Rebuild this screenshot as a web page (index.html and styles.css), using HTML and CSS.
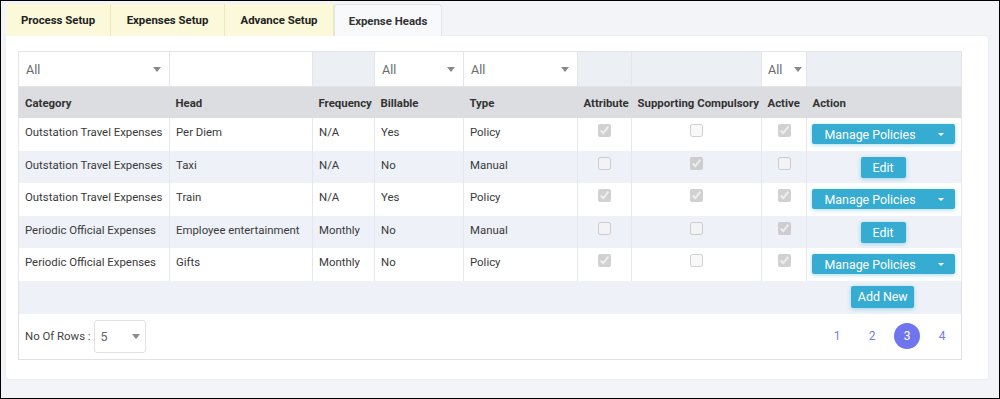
FILE: index.html
```html
<!DOCTYPE html>
<html>
<head>
<meta charset="utf-8">
<link rel="stylesheet" href="styles.css">
</head>
<body>
<div class="frame">
  <div class="tabs">
    <div class="tab">Process Setup</div>
    <div class="tab">Expenses Setup</div>
    <div class="tab">Advance Setup</div>
    <div class="tab active">Expense Heads</div>
  </div>
  <div class="panel">
    <table class="grid">
      <colgroup>
        <col class="c-cat"><col class="c-head"><col class="c-freq"><col class="c-bill"><col class="c-type"><col class="c-attr"><col class="c-sup"><col class="c-act"><col class="c-action">
      </colgroup>
      <thead>
        <tr class="filters">
          <td class="sel"><div class="dd"><span>All</span><i class="caret"></i></div></td>
          <td class="inp"></td>
          <td class="blank"></td>
          <td class="sel"><div class="dd"><span>All</span><i class="caret"></i></div></td>
          <td class="sel"><div class="dd"><span>All</span><i class="caret"></i></div></td>
          <td class="blank"></td>
          <td class="blank"></td>
          <td class="sel"><div class="dd narrow"><span>All</span><i class="caret"></i></div></td>
          <td class="blank"></td>
        </tr>
        <tr class="heads">
          <th>Category</th><th>Head</th><th>Frequency</th><th>Billable</th><th>Type</th><th>Attribute</th><th>Supporting Compulsory</th><th>Active</th><th>Action</th>
        </tr>
      </thead>
      <tbody>
        <tr>
          <td>Outstation Travel Expenses</td><td>Per Diem</td><td>N/A</td><td>Yes</td><td>Policy</td>
          <td class="chk"><input type="checkbox" disabled checked></td>
          <td class="chk"><input type="checkbox" disabled></td>
          <td class="chk"><input type="checkbox" disabled checked></td>
          <td class="act"><button class="btn split"><span>Manage Policies</span><i class="bcaret"></i></button></td>
        </tr>
        <tr class="alt">
          <td>Outstation Travel Expenses</td><td>Taxi</td><td>N/A</td><td>No</td><td>Manual</td>
          <td class="chk"><input type="checkbox" disabled></td>
          <td class="chk"><input type="checkbox" disabled checked></td>
          <td class="chk"><input type="checkbox" disabled></td>
          <td class="act"><button class="btn edit">Edit</button></td>
        </tr>
        <tr>
          <td>Outstation Travel Expenses</td><td>Train</td><td>N/A</td><td>Yes</td><td>Policy</td>
          <td class="chk"><input type="checkbox" disabled checked></td>
          <td class="chk"><input type="checkbox" disabled checked></td>
          <td class="chk"><input type="checkbox" disabled checked></td>
          <td class="act"><button class="btn split"><span>Manage Policies</span><i class="bcaret"></i></button></td>
        </tr>
        <tr class="alt">
          <td>Periodic Official Expenses</td><td>Employee entertainment</td><td>Monthly</td><td>No</td><td>Manual</td>
          <td class="chk"><input type="checkbox" disabled></td>
          <td class="chk"><input type="checkbox" disabled></td>
          <td class="chk"><input type="checkbox" disabled checked></td>
          <td class="act"><button class="btn edit">Edit</button></td>
        </tr>
        <tr>
          <td>Periodic Official Expenses</td><td>Gifts</td><td>Monthly</td><td>No</td><td>Policy</td>
          <td class="chk"><input type="checkbox" disabled checked></td>
          <td class="chk"><input type="checkbox" disabled></td>
          <td class="chk"><input type="checkbox" disabled checked></td>
          <td class="act"><button class="btn split"><span>Manage Policies</span><i class="bcaret"></i></button></td>
        </tr>
      </tbody>
      <tfoot>
        <tr class="addrow">
          <td colspan="8"></td>
          <td class="act"><button class="btn add">Add New</button></td>
        </tr>
        <tr class="pager-row">
          <td colspan="9">
            <div class="pager-bar">
              <div class="rows">
                <span class="rows-label">No Of Rows :</span>
                <div class="rows-sel"><span>5</span><i class="caret"></i></div>
              </div>
              <div class="pages">
                <span class="pg">1</span>
                <span class="pg">2</span>
                <span class="pg current">3</span>
                <span class="pg">4</span>
              </div>
            </div>
          </td>
        </tr>
      </tfoot>
    </table>
  </div>
</div>
</body>
</html>
```

FILE: styles.css
```css
html, body {
  margin: 0;
  padding: 0;
}
body {
  background: #f3f4f8;
  font-family: Roboto, "Liberation Sans", Arial, sans-serif;
  color: #333;
}
.frame {
  width: 1000px;
  height: 399px;
  box-sizing: border-box;
  border: 1px solid #000;
  padding: 3px 0 0 5px;
  background: #f3f4f8;
}
.tabs {
  display: flex;
  height: 32px;
}
.tab {
  display: flex;
  align-items: center;
  justify-content: center;
  box-sizing: border-box;
  height: 32px;
  font-size: 11.4px;
  font-weight: 700;
  color: #222;
  background: #fbf9da;
  border-right: 1px solid #ece9bd;
}
.tab:nth-child(1) { width: 105px; }
.tab:nth-child(2) { width: 114px; }
.tab:nth-child(3) { width: 109px; }
.tab.active {
  width: 108px;
  background: #f8f9fb;
  border: 1px solid #e1e3e8;
  border-bottom: none;
  border-radius: 4px 4px 0 0;
  color: #333;
}
.panel {
  width: 982px;
  height: 343px;
  box-sizing: border-box;
  background: #fff;
  padding: 15px 0 0 12px;
  border-radius: 0 3px 3px 3px;
  box-shadow: 0 0 3px rgba(0, 0, 0, 0.07);
}
.grid {
  width: 943px;
  table-layout: fixed;
  border-collapse: collapse;
  border: 1px solid #dfe1e6;
  font-size: 11.4px;
}
.c-cat { width: 151px; }
.c-head { width: 143px; }
.c-freq { width: 62px; }
.c-bill { width: 89px; }
.c-type { width: 114px; }
.c-attr { width: 54px; }
.c-sup { width: 130px; }
.c-act { width: 45px; }
.c-action { width: 155px; }

.filters td {
  height: 34px;
  padding: 0;
  border: 1px solid #e3e5ea;
  background: #eceff3;
}
.filters td.sel, .filters td.inp {
  background: #fff;
}
.dd {
  display: flex;
  align-items: center;
  justify-content: space-between;
  height: 34px;
  padding: 0 8px 0 7px;
  font-size: 12.5px;
  color: #6a6a6a;
}
.dd.narrow {
  padding: 0 4px 0 6px;
}
.caret {
  display: block;
  width: 0;
  height: 0;
  border-left: 4.5px solid transparent;
  border-right: 4.5px solid transparent;
  border-top: 5px solid #8a8a8a;
}
.heads th {
  height: 31px;
  padding: 0 6px;
  text-align: left;
  font-weight: 700;
  font-size: 11.4px;
  color: #333;
  background: #dcdde1;
  white-space: nowrap;
}
tbody tr {
  height: 32.5px;
  background: #fff;
}
tbody tr.alt {
  background: #eef1f8;
}
tbody td {
  padding: 5px 6px 0;
  vertical-align: top;
  line-height: 19px;
  color: #3a3a3a;
  border-left: 1px solid #e6e7ea;
  border-right: 1px solid #e6e7ea;
  white-space: nowrap;
}
tbody td.chk {
  text-align: center;
  padding: 6px 0 0;
  line-height: 0;
}
.chk input {
  margin: 0;
  width: 13px;
  height: 13px;
}
td.act {
  text-align: center;
  padding: 6px 0 0;
  line-height: 0;
}
.btn {
  display: inline-flex;
  align-items: center;
  justify-content: center;
  box-sizing: border-box;
  border: none;
  border-radius: 2px;
  background: #36acd2;
  color: #fff;
  font-family: Roboto, "Liberation Sans", Arial, sans-serif;
  font-size: 12.4px;
  padding: 0;
  box-shadow: 0 1px 4px rgba(54, 172, 210, 0.45);
}
.btn.split {
  width: 143px;
  height: 20px;
  justify-content: space-between;
  padding: 0 11px 0 13px;
  position: relative;
  left: -1px;
}
.bcaret {
  display: block;
  width: 0;
  height: 0;
  border-left: 3px solid transparent;
  border-right: 3px solid transparent;
  border-top: 3px solid #fff;
}
.btn.edit {
  width: 45px;
  height: 21px;
  position: relative;
  left: -1px;
}
.addrow {
  height: 33px;
  background: #eef1f8;
}
.addrow td {
  padding: 0;
  border: none;
}
.addrow td.act {
  padding: 5px 0 0;
  vertical-align: top;
}
.btn.add {
  width: 63px;
  height: 22px;
  position: relative;
  left: -1px;
}
.pager-row td {
  height: 45px;
  padding: 0;
  background: #fff;
}
.pager-bar {
  display: flex;
  align-items: center;
  justify-content: space-between;
  padding: 0 6px 0 6px;
  height: 45px;
}
.rows {
  display: flex;
  align-items: center;
}
.rows-label {
  color: #444;
  font-size: 11.4px;
  margin-right: 3px;
}
.rows-sel {
  display: flex;
  align-items: center;
  justify-content: space-between;
  box-sizing: border-box;
  width: 52px;
  height: 33px;
  padding: 0 5px 0 6px;
  border: 1px solid #dfe1e5;
  border-radius: 3px;
  font-size: 12.5px;
  color: #666;
}
.pages {
  display: flex;
  align-items: center;
  gap: 9px;
}
.pg {
  display: flex;
  align-items: center;
  justify-content: center;
  width: 26px;
  height: 26px;
  border-radius: 50%;
  font-size: 12px;
  color: #7479ee;
}
.pg.current {
  background: #6f75ee;
  color: #fff;
}
```
